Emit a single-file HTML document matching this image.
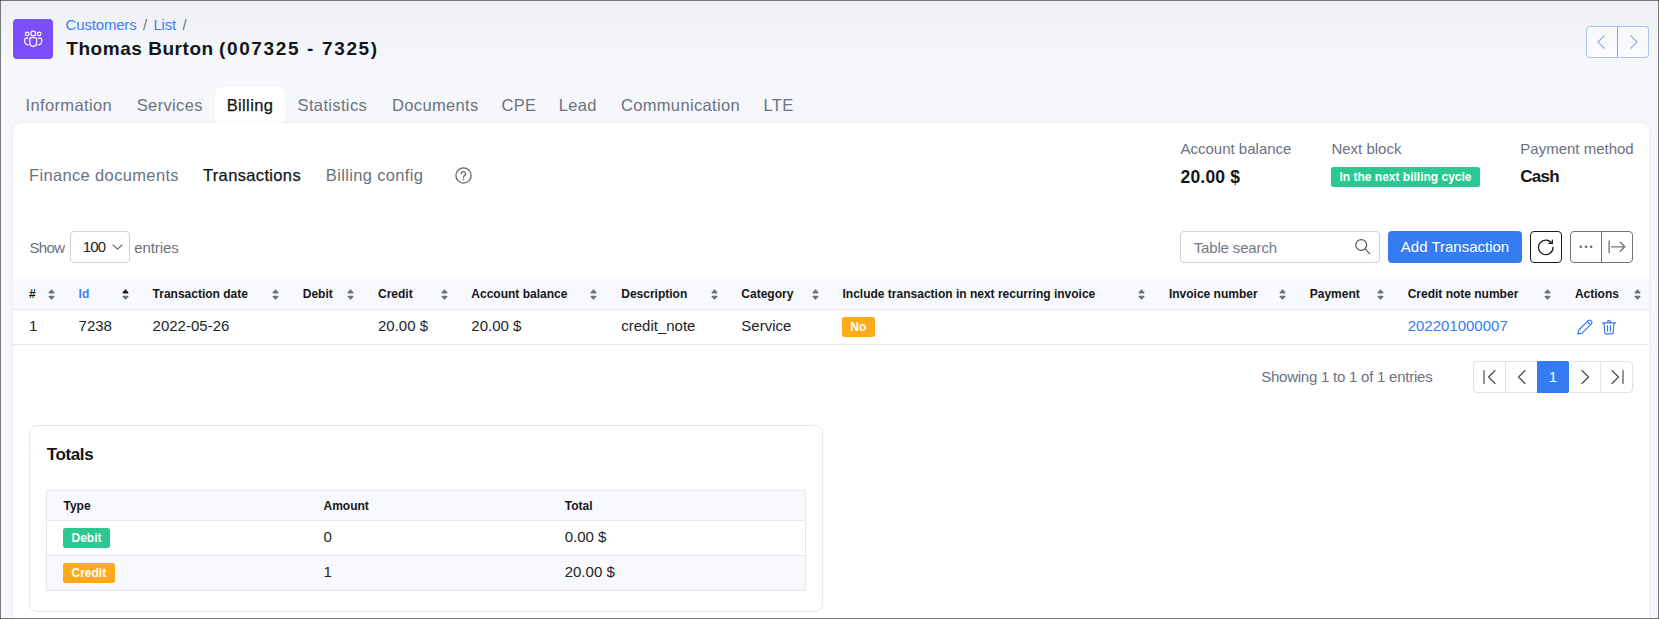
<!DOCTYPE html>
<html lang="en">
<head>
<meta charset="utf-8">
<title>Thomas Burton (007325 - 7325)</title>
<style>
*{box-sizing:border-box;margin:0;padding:0}
html,body{width:1659px;height:619px;overflow:hidden}
body{position:relative;background:#f6f7fb;font-family:"Liberation Sans",sans-serif;color:#212529;font-size:15px}
a{text-decoration:none;color:#357bf2}
.abs{position:absolute;white-space:nowrap}
.frame i{position:absolute;background:rgba(0,0,0,.51);z-index:50}
.frame .t{left:0;top:0;width:1659px;height:1px}
.frame .b{left:0;top:618px;width:1659px;height:1px}
.frame .l{left:0;top:0;width:1px;height:619px}
.frame .r{left:1658px;top:0;width:1px;height:619px}
.topfade{position:absolute;left:0;top:0;width:1659px;height:58px;background:linear-gradient(#eff0f4,#f6f7fb)}

/* header */
.mod-icon{left:13px;top:19px;width:40px;height:40px;border-radius:4px;background:#7c4dfc}
.mod-icon svg{position:absolute;left:9px;top:10px}
.crumbs{left:65.6px;top:15px;font-size:15px;line-height:20px;color:#6b7280}
.crumbs a{color:#3b80f5;letter-spacing:-.18px}
.crumbs i{font-style:normal;padding:0 6.4px}
h1{left:66.3px;top:36px;font-size:19px;line-height:26px;font-weight:700;color:#14161a;letter-spacing:0}
.navbtn{left:1586px;top:26px;width:63px;height:32px;display:flex}
.navbtn span{display:block;width:32px;height:32px;border:1px solid #a9c4f8;position:relative;background:rgba(255,255,255,.45)}
.navbtn span:first-child{border-radius:4px 0 0 4px}
.navbtn span:last-child{border-radius:0 4px 4px 0;margin-left:-1px;border-left-color:#7ea6f4}
.navbtn svg{position:absolute;left:8.4px;top:6.9px}

/* main tabs */
.tabs{left:13px;top:87px;height:36px;display:flex;list-style:none}
.tabs li{height:36px;font-size:16.5px;line-height:36px;color:#6b7280;border-radius:8px 8px 0 0;text-align:center;letter-spacing:.35px}
.tabs li.on{background:#fff;color:#14161a;-webkit-text-stroke:.25px #14161a}

/* card */
.card{left:13px;top:123px;width:1636px;height:510px;background:#fff;border-radius:8px 8px 0 0;box-shadow:0 0 4px rgba(30,40,80,.07)}
.subtabs{left:29px;top:163px;display:flex;list-style:none;font-size:16.5px;line-height:24px;color:#6b7280;letter-spacing:.35px}
.subtabs li{margin-right:24px}
.subtabs li.on{color:#14161a;-webkit-text-stroke:.25px #14161a}
.help{left:455.3px;top:166.5px;width:17px;height:17px}
.info{font-size:15px;line-height:20px;color:#6b7280}
.info b{display:block;position:absolute;left:0;top:26.9px;letter-spacing:.2px;font-size:17.5px;line-height:22px;color:#14161a;font-weight:700}
.badge{display:inline-block;height:20px;line-height:20px;padding:0 8.5px;border-radius:2.5px;color:#fff;font-size:12px;font-weight:700;white-space:nowrap}
.green{background:#2bc88f}
.orange{background:#ffab19}

/* toolbar */
.show{left:29.4px;top:238.3px;font-size:15px;line-height:20px;color:#6b7280}
.sel{left:70px;top:231px;width:60px;height:32px;border:1px solid #ced4da;border-radius:4px;background:#fff;font-size:15px;line-height:29px;color:#212529;padding-left:11.7px;letter-spacing:-.75px}
.sel svg{position:absolute;left:40.6px;top:10px}
.search{left:1180px;top:231px;width:200px;height:32px;border:1px solid #ced4da;border-radius:4px;background:#fff;font-size:15px;line-height:32.4px;color:#737b87;padding-left:12.7px;letter-spacing:-.15px}
.search svg{position:absolute;left:173px;top:7px}
.btn-add{left:1388px;top:231px;width:134px;height:32px;border-radius:4px;background:#357bf2;color:#fff;font-size:15px;line-height:31px;text-align:center}
.btn-ref{left:1530px;top:231px;width:32px;height:32px;border:1px solid #1b1d21;border-radius:4px;background:#fff}
.btn-ref svg{position:absolute;left:6px;top:6px}
.btn-grp{left:1570px;top:231px;width:63px;height:32px;border:1px solid #6c757d;border-radius:4px;background:#fff}
.btn-grp:before{content:"";position:absolute;left:30px;top:0;width:1px;height:30px;background:#6c757d}
.btn-grp svg{position:absolute;top:7px}

/* data table */
table{border-collapse:collapse;table-layout:fixed}
.grid{left:13px;top:279px;width:1636px}
.grid th{height:30px;background:#f8f9fc;border-bottom:1px solid #e4e7ed;font-size:12px;font-weight:700;text-align:left;color:#14161a;padding:0 0 0 16px;position:relative;white-space:nowrap}
.grid th.blue{color:#3b80f5}
.grid td{height:35px;border-bottom:1px solid #e4e7ed;font-size:15px;color:#212529;padding:0 0 2.6px 16px;white-space:nowrap}
.grid th svg{position:absolute;top:9.5px;right:7.8px}
.grid td.acts{padding-left:18px;position:relative}
.acts svg{position:absolute;top:9.8px;left:18px}
.grid .badge{position:relative;top:1.8px;left:-.7px}
.acts svg+svg{left:42px;top:9px}

/* paging */
.showing{left:1261.2px;top:366.8px;font-size:15px;line-height:20px;color:#6b7280;letter-spacing:-.235px}
.pager{left:1473px;top:361px;width:160px;height:32px;display:flex;list-style:none;border:1px solid #dde1e8;border-radius:4px}
.pager li{width:32px;height:30px;border-left:1px solid #dde1e8;position:relative;font-size:15px;line-height:30px;text-align:center;color:#fff}
.pager li:first-child{border-left:0;width:31px}
.pager li.on{background:#357bf2;height:32px;top:-1px;line-height:32px;border-left-color:#357bf2}
.pager li.on + li{border-left-color:#357bf2}
.pager svg{position:absolute;left:7px;top:6px}

/* totals */
.totals{left:29px;top:425px;width:794px;height:187px;border:1px solid #e6e9ee;border-radius:8px;background:#fff}
.totals h2{position:absolute;left:16.8px;top:18px;font-size:17px;line-height:22px;font-weight:700;color:#14161a;letter-spacing:-.4px}
.sum{position:absolute;left:16px;top:64px;width:760px;border:1px solid #e4e7ed}
.sum th{height:30px;background:#f8f9fc;border-bottom:1px solid #e4e7ed;font-size:12px;font-weight:700;text-align:left;color:#14161a;padding-left:16.5px}
.sum td{height:35px;border-bottom:1px solid #e4e7ed;font-size:15px;color:#212529;padding:0 0 2.6px 16.5px}
.sum tr.alt td{background:#f8f9fc}
.sum .badge{position:relative;top:1.3px;left:-.5px}
</style>
</head>
<body>
<div class="topfade"></div>

<div class="abs mod-icon">
<svg width="22" height="20" viewBox="0 0 22 20" fill="none" stroke="#fff" stroke-width="1.2" stroke-linecap="round" stroke-linejoin="round">
<circle cx="11.2" cy="4.45" r="2.4"/><circle cx="5.2" cy="4.9" r="1.8"/><circle cx="17.2" cy="4.9" r="1.8"/>
<path d="M7.8 9.9a1.2 1.2 0 0 1 1.2-1.2h4.4a1.2 1.2 0 0 1 1.2 1.2v4.1a3.4 3.4 0 0 1-6.8 0z"/>
<path d="M5.9 9.2H3.9a1.2 1.2 0 0 0-1.2 1.2v2.2a3.3 3.3 0 0 0 3.3 3.3"/>
<path d="M16.5 9.2h2a1.2 1.2 0 0 1 1.2 1.2v2.2a3.3 3.3 0 0 1-3.3 3.3"/>
</svg>
</div>
<div class="abs crumbs"><a>Customers</a><i>/</i><a>List</a><i>/</i></div>
<h1 class="abs"><span style="letter-spacing:.54px">Thomas Burton</span> <span style="letter-spacing:1.64px">(007325 - 7325)</span></h1>
<div class="abs navbtn">
<span><svg width="14" height="16" viewBox="0 0 14 16" fill="none" stroke="#8fb2f6" stroke-width="1.2"><path d="M9.5 1.5 3 8l6.5 6.5"/></svg></span>
<span><svg width="14" height="16" viewBox="0 0 14 16" fill="none" stroke="#8fb2f6" stroke-width="1.2"><path d="M4.5 1.5 11 8l-6.5 6.5"/></svg></span>
</div>

<ul class="abs tabs">
<li style="width:111.6px">Information</li><li style="width:90.4px">Services</li><li class="on" style="width:70px">Billing</li><li style="width:94.7px">Statistics</li><li style="width:111.3px">Documents</li><li style="width:56px">CPE</li><li style="width:61.5px">Lead</li><li style="width:144px">Communication</li><li style="width:52px">LTE</li>
</ul>

<div class="abs card"></div>

<ul class="abs subtabs">
<li>Finance documents</li><li class="on">Transactions</li><li style="margin-left:.8px">Billing config</li>
</ul>
<svg class="abs help" viewBox="0 0 17 17" fill="none" stroke="#5f6670" stroke-width="1.3"><circle cx="8.5" cy="8.5" r="7.6"/><path d="M6.4 6.7a2.1 2.1 0 1 1 3.1 1.9c-.7.4-1 .8-1 1.6" stroke-linecap="round"/><circle cx="8.5" cy="12.3" r=".5" fill="#5f6670" stroke-width=".6"/></svg>

<div class="abs info" style="left:1180.5px;top:139.4px">Account balance<b>20.00 $</b></div>
<div class="abs info" style="left:1331.4px;top:139.4px">Next block</div>
<span class="abs badge green" style="left:1331px;top:167px">In the next billing cycle</span>
<div class="abs info" style="left:1520.3px;top:139.4px">Payment method<b style="font-size:17px;letter-spacing:-.75px">Cash</b></div>

<div class="abs show" style="letter-spacing:-.6px">Show</div>
<div class="abs sel">100<svg width="11" height="10" viewBox="0 0 11 10" fill="none" stroke="#5c636a" stroke-width="1.1" stroke-linejoin="round" stroke-linecap="round"><path d="M1 3l4.5 4.2 4.5-4.2"/></svg></div>
<div class="abs show" style="left:134.3px;letter-spacing:-.1px">entries</div>

<div class="abs search">Table search<svg width="18" height="18" viewBox="0 0 18 18" fill="none" stroke="#4d535b" stroke-width="1.2" stroke-linecap="round"><circle cx="7.2" cy="6" r="5.4"/><path d="M11.1 9.9 15.6 14.6"/></svg></div>
<div class="abs btn-add">Add Transaction</div>
<div class="abs btn-ref"><svg width="20" height="20" viewBox="0 0 20 20" fill="none" stroke="#1b1d21" stroke-width="1.3" stroke-linecap="round" stroke-linejoin="round"><path d="M16.1 9.3A7.3 7.3 0 1 1 15 5.5"/><path d="M15.35 2.2v3.2h-3.7"/></svg></div>
<div class="abs btn-grp">
<svg style="left:7px" width="16" height="16" viewBox="0 0 16 16" fill="#5c636a"><circle cx="2.8" cy="7.8" r="1.25"/><circle cx="8" cy="7.8" r="1.25"/><circle cx="13.2" cy="7.8" r="1.25"/></svg>
<svg style="left:36px" width="20" height="16" viewBox="0 0 20 16" fill="none" stroke="#6c757d" stroke-width="1.3" stroke-linecap="round" stroke-linejoin="round"><path d="M2.1 1.9v11.8M4.6 7.8h13M13.3 3.3l4.5 4.5-4.5 4.5"/></svg>
</div>

<table class="abs grid">
<colgroup><col style="width:49.6px"><col style="width:74px"><col style="width:150.2px"><col style="width:75.2px"><col style="width:93.4px"><col style="width:149.9px"><col style="width:120.1px"><col style="width:101.2px"><col style="width:326.4px"><col style="width:140.8px"><col style="width:97.9px"><col style="width:167.3px"><col style="width:90px"></colgroup>
<thead><tr>
<th>#<svg width="7" height="11" viewBox="0 0 7 11" stroke-width="1.6" stroke-linejoin="round"><path d="M3.5 1.2 5.7 3.7H1.3z" fill="#6c757d" stroke="#6c757d"/><path d="M3.5 9.8 1.3 7.5h4.4z" fill="#6c757d" stroke="#6c757d"/></svg></th><th class="blue">Id<svg width="7" height="11" viewBox="0 0 7 11" stroke-width="1.6" stroke-linejoin="round"><path d="M3.5 1.2 5.7 3.7H1.3z" fill="#1a1d21" stroke="#1a1d21"/><path d="M3.5 9.8 1.3 7.5h4.4z" fill="#6c757d" stroke="#6c757d"/></svg></th><th>Transaction date<svg width="7" height="11" viewBox="0 0 7 11" stroke-width="1.6" stroke-linejoin="round"><path d="M3.5 1.2 5.7 3.7H1.3z" fill="#6c757d" stroke="#6c757d"/><path d="M3.5 9.8 1.3 7.5h4.4z" fill="#6c757d" stroke="#6c757d"/></svg></th><th>Debit<svg width="7" height="11" viewBox="0 0 7 11" stroke-width="1.6" stroke-linejoin="round"><path d="M3.5 1.2 5.7 3.7H1.3z" fill="#6c757d" stroke="#6c757d"/><path d="M3.5 9.8 1.3 7.5h4.4z" fill="#6c757d" stroke="#6c757d"/></svg></th><th>Credit<svg width="7" height="11" viewBox="0 0 7 11" stroke-width="1.6" stroke-linejoin="round"><path d="M3.5 1.2 5.7 3.7H1.3z" fill="#6c757d" stroke="#6c757d"/><path d="M3.5 9.8 1.3 7.5h4.4z" fill="#6c757d" stroke="#6c757d"/></svg></th><th>Account balance<svg width="7" height="11" viewBox="0 0 7 11" stroke-width="1.6" stroke-linejoin="round"><path d="M3.5 1.2 5.7 3.7H1.3z" fill="#6c757d" stroke="#6c757d"/><path d="M3.5 9.8 1.3 7.5h4.4z" fill="#6c757d" stroke="#6c757d"/></svg></th><th>Description<svg width="7" height="11" viewBox="0 0 7 11" stroke-width="1.6" stroke-linejoin="round"><path d="M3.5 1.2 5.7 3.7H1.3z" fill="#6c757d" stroke="#6c757d"/><path d="M3.5 9.8 1.3 7.5h4.4z" fill="#6c757d" stroke="#6c757d"/></svg></th><th>Category<svg width="7" height="11" viewBox="0 0 7 11" stroke-width="1.6" stroke-linejoin="round"><path d="M3.5 1.2 5.7 3.7H1.3z" fill="#6c757d" stroke="#6c757d"/><path d="M3.5 9.8 1.3 7.5h4.4z" fill="#6c757d" stroke="#6c757d"/></svg></th><th>Include transaction in next recurring invoice<svg width="7" height="11" viewBox="0 0 7 11" stroke-width="1.6" stroke-linejoin="round"><path d="M3.5 1.2 5.7 3.7H1.3z" fill="#6c757d" stroke="#6c757d"/><path d="M3.5 9.8 1.3 7.5h4.4z" fill="#6c757d" stroke="#6c757d"/></svg></th><th>Invoice number<svg width="7" height="11" viewBox="0 0 7 11" stroke-width="1.6" stroke-linejoin="round"><path d="M3.5 1.2 5.7 3.7H1.3z" fill="#6c757d" stroke="#6c757d"/><path d="M3.5 9.8 1.3 7.5h4.4z" fill="#6c757d" stroke="#6c757d"/></svg></th><th>Payment<svg width="7" height="11" viewBox="0 0 7 11" stroke-width="1.6" stroke-linejoin="round"><path d="M3.5 1.2 5.7 3.7H1.3z" fill="#6c757d" stroke="#6c757d"/><path d="M3.5 9.8 1.3 7.5h4.4z" fill="#6c757d" stroke="#6c757d"/></svg></th><th>Credit note number<svg width="7" height="11" viewBox="0 0 7 11" stroke-width="1.6" stroke-linejoin="round"><path d="M3.5 1.2 5.7 3.7H1.3z" fill="#6c757d" stroke="#6c757d"/><path d="M3.5 9.8 1.3 7.5h4.4z" fill="#6c757d" stroke="#6c757d"/></svg></th><th>Actions<svg width="7" height="11" viewBox="0 0 7 11" stroke-width="1.6" stroke-linejoin="round"><path d="M3.5 1.2 5.7 3.7H1.3z" fill="#6c757d" stroke="#6c757d"/><path d="M3.5 9.8 1.3 7.5h4.4z" fill="#6c757d" stroke="#6c757d"/></svg></th>
</tr></thead>
<tbody><tr>
<td>1</td><td>7238</td><td>2022-05-26</td><td></td><td>20.00 $</td><td>20.00 $</td><td>credit_note</td><td>Service</td><td><span class="badge orange">No</span></td><td></td><td></td><td><a>202201000007</a></td><td class="acts"><svg width="16" height="16" viewBox="0 0 16 16" fill="none" stroke="#357bf2" stroke-width="1.2" stroke-linecap="round" stroke-linejoin="round"><path d="M1.9 11 11.2 1.7a2.2 2.2 0 0 1 3.1 3.1L5 14.1.8 15.2z"/><path d="M10.4 2.5l3.1 3.1"/></svg><svg width="16" height="16" viewBox="0 0 16 16" fill="none" stroke="#357bf2" stroke-width="1.2" stroke-linecap="round" stroke-linejoin="round"><path d="M1.5 3.9h13M6.7 3.9V2.7a1.3 1.3 0 0 1 2.6 0v1.2M3 3.9l.8 9.8a1.2 1.2 0 0 0 1.2 1.1h6a1.2 1.2 0 0 0 1.2-1.1l.8-9.8M6.55 6.6v5.6M9.45 6.6v5.6"/></svg></td>
</tr></tbody>
</table>

<div class="abs showing">Showing 1 to 1 of 1 entries</div>
<ul class="abs pager">
<li><svg width="18" height="18" viewBox="0 0 18 18" fill="none" stroke="#40464d" stroke-width="1.15" stroke-linecap="round"><path d="M3 2.5v13M14 2.5 7.5 9l6.5 6.5"/></svg></li>
<li><svg width="18" height="18" viewBox="0 0 18 18" fill="none" stroke="#40464d" stroke-width="1.15" stroke-linecap="round"><path d="M12 2.5 5.5 9l6.5 6.5"/></svg></li>
<li class="on">1</li>
<li><svg width="18" height="18" viewBox="0 0 18 18" fill="none" stroke="#40464d" stroke-width="1.15" stroke-linecap="round"><path d="M6 2.5 12.5 9 6 15.5"/></svg></li>
<li><svg width="18" height="18" viewBox="0 0 18 18" fill="none" stroke="#40464d" stroke-width="1.15" stroke-linecap="round"><path d="M15 2.5v13M4 2.5 10.5 9 4 15.5"/></svg></li>
</ul>

<div class="abs totals">
<h2>Totals</h2>
<table class="sum">
<colgroup><col style="width:260.5px"><col style="width:241.2px"><col></colgroup>
<thead><tr><th>Type</th><th>Amount</th><th>Total</th></tr></thead>
<tbody>
<tr><td><span class="badge green">Debit</span></td><td>0</td><td>0.00 $</td></tr>
<tr class="alt"><td><span class="badge orange">Credit</span></td><td>1</td><td>20.00 $</td></tr>
</tbody>
</table>
</div>

<div class="frame"><i class="t"></i><i class="b"></i><i class="l"></i><i class="r"></i></div>
</body>
</html>
